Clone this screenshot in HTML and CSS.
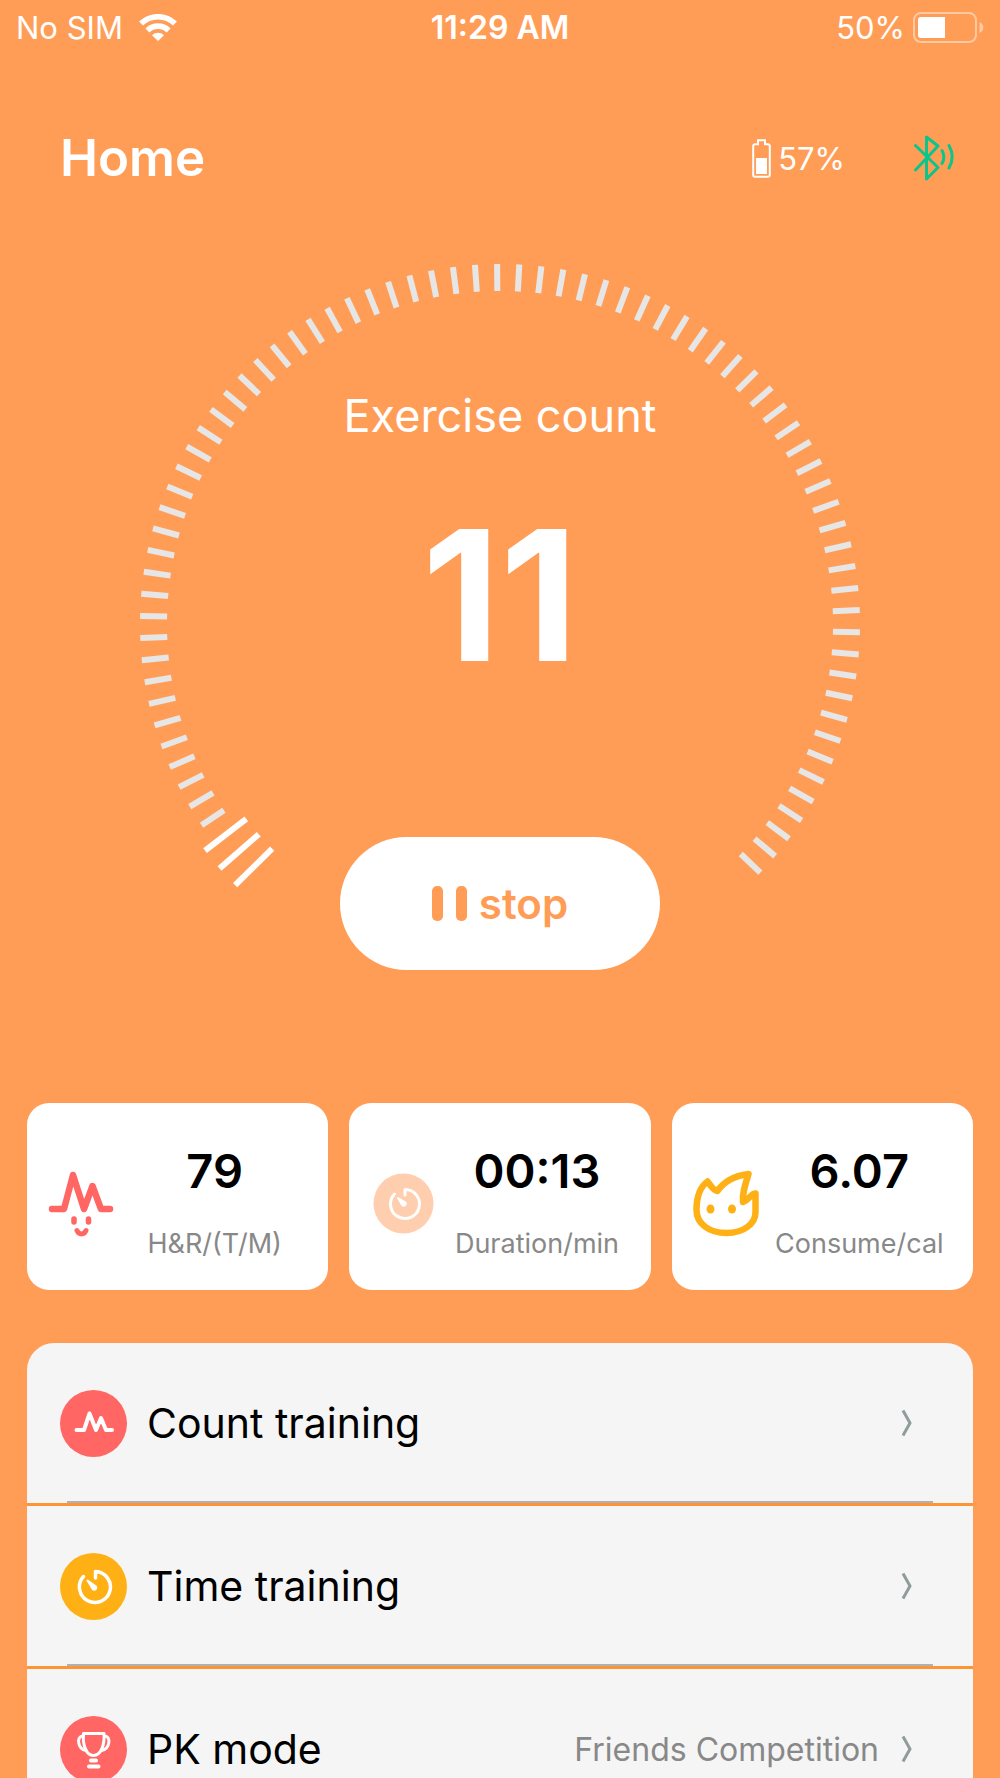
FILE: index.html
```html
<!DOCTYPE html>
<html lang="en">
<head>
  <meta charset="UTF-8" />
  <meta name="viewport" content="width=device-width, initial-scale=1.0" />
  <title>Home</title>
  <link rel="stylesheet" href="styles.css">
</head>
<body>
  <div class="screen">
    <!-- Status bar -->
    <div class="status-bar">
      <div class="status-left">
        <span>No SIM</span>
        <svg class="wifi" viewBox="0 0 38 27" aria-hidden="true">
          <g fill="none" stroke="#fff" stroke-width="5.6">
            <path d="M2 9.6a24.5 24.5 0 0 1 34 0" />
            <path d="M8.4 16.4a15.3 15.3 0 0 1 21.2 0" />
          </g>
          <path d="M19 27l-6-5.8a8.6 8.6 0 0 1 12 0z" fill="#fff" />
        </svg>
      </div>
      <span class="clock">11:29 AM</span>
      <div class="status-right">
        <span>50%</span>
        <svg class="phone-battery" viewBox="0 0 71 31" aria-hidden="true">
          <rect x="1" y="1" width="62" height="29" rx="7" fill="none" stroke="#fff" stroke-opacity=".45" stroke-width="2" />
          <path d="M5 8a3 3 0 0 1 3-3h24v21H8a3 3 0 0 1-3-3z" fill="#fff" />
          <path d="M66.500 10c5 2 5 9 0 11z" fill="#fff" fill-opacity=".45" />
        </svg>
      </div>
    </div>

    <!-- Page header -->
    <header class="header">
      <h1>Home</h1>
      <div class="device">
        <svg class="device-battery" viewBox="0 0 19 39" aria-hidden="true">
          <path d="M6 1.200h7v4h3a1.800 1.800 0 0 1 1.800 1.800v29a1.800 1.800 0 0 1-1.800 1.800H3A1.800 1.800 0 0 1 1.200 36V7A1.800 1.800 0 0 1 3 5.200h3z" fill="none" stroke="#fff" stroke-width="2" />
          <rect x="4" y="19" width="11" height="16" fill="#fff" />
        </svg>
        <span class="device-level">57%</span>
        <svg class="bluetooth" viewBox="0 0 40 46" fill="none" stroke="#0bc58b" stroke-width="3" stroke-linejoin="round" stroke-linecap="round" aria-hidden="true">
          <path d="M1.500 10.500L24 32.500 12.500 44V2L24 11 1.500 35" />
          <path d="M28 15.500a13 13 0 0 1 0 13" />
          <path d="M35 10.500a23 23 0 0 1 0 22.500" />
        </svg>
      </div>
    </header>

    <!-- Exercise gauge -->
    <section class="gauge">
      <svg class="dial" id="dial" viewBox="-372 -360 744 706" aria-hidden="true"></svg>
      <div class="gauge-content">
        <h2>Exercise count</h2>
        <output class="count">11</output>
        <button type="button" class="stop">
          <svg viewBox="0 0 35 35" aria-hidden="true">
            <rect width="11" height="35" rx="5" />
            <rect x="24" width="11" height="35" rx="5" />
          </svg>
          stop
        </button>
      </div>
    </section>

    <!-- Stats -->
    <section class="stats">
      <div class="card">
        <svg viewBox="0 0 68 68" fill="none" stroke="#ff6664" stroke-linejoin="round" stroke-linecap="round" aria-hidden="true">
          <path d="M5 40h12L26 6l11 34 8.500-23L54 40h9" stroke-width="6.500" />
          <path d="M27 50v3M41.500 50v3" stroke-width="5.500" />
          <path d="M30 61.500c2 4.500 7 4.500 9 0" stroke-width="5" />
        </svg>
        <div class="stat">
          <span class="value">79</span>
          <span class="label">H&amp;R/(T/M)</span>
        </div>
      </div>
      <div class="card">
        <svg viewBox="0 0 68 68" aria-hidden="true">
          <circle cx="34.500" cy="34.500" r="30" fill="#ffceae" />
          <path d="M25.500 25A14.500 14.500 0 1 0 36 20.500V26" fill="none" stroke="#fff" stroke-width="3" stroke-linejoin="round" stroke-linecap="round" />
          <path d="M29 29l7.500 4.500a2.200 2.200 0 0 1-3 3z" fill="#fff" stroke="#fff" stroke-width="2" stroke-linejoin="round" />
        </svg>
        <div class="stat">
          <span class="value">00:13</span>
          <span class="label">Duration/min</span>
        </div>
      </div>
      <div class="card">
        <svg viewBox="0 0 68 68" aria-hidden="true">
          <path d="M15.500 12.500C8 18 4.500 28 4.500 41c0 14 13 23 30 23s29-9 29-21V24.500c-4.500 0-6 6-12.500 8.500-1-8 2-17 5.500-28C42 7 31.500 13 25.500 22c-5-1-6.500-5-10-9.500z" fill="none" stroke="#ffb014" stroke-width="6.500" stroke-linejoin="round" />
          <ellipse cx="18.500" cy="40" rx="4" ry="4.500" fill="#ffb014" />
          <ellipse cx="40" cy="40" rx="4" ry="4.500" fill="#ffb014" />
        </svg>
        <div class="stat">
          <span class="value">6.07</span>
          <span class="label">Consume/cal</span>
        </div>
      </div>
    </section>

    <!-- Training modes -->
    <nav class="modes">
      <ul>
        <li>
          <a href="#count">
            <svg class="mode-icon" viewBox="0 0 67 67" aria-hidden="true">
              <circle cx="33.500" cy="33.500" r="33.500" fill="#ff6664" />
              <path d="M16.500 40h7.500l5.500-16.500L36 40l5-12 5 12h6" fill="none" stroke="#fff" stroke-width="4" stroke-linejoin="round" stroke-linecap="round" />
            </svg>
            <span class="mode-name">Count training</span>
            <svg class="chevron" viewBox="0 0 11 28" aria-hidden="true"><path d="M2 1.500l7 12.500-7 12.500" /></svg>
          </a>
        </li>
        <li>
          <a href="#time">
            <svg class="mode-icon" viewBox="0 0 67 67" aria-hidden="true">
              <circle cx="33.500" cy="33.500" r="33.500" fill="#ffb014" />
              <path d="M23.500 23.500A15.500 15.500 0 1 0 35.500 18.500V25" fill="none" stroke="#fff" stroke-width="3.500" stroke-linejoin="round" stroke-linecap="round" />
              <path d="M27.500 27.500l8.500 6a2.200 2.200 0 0 1-3 3z" fill="#fff" stroke="#fff" stroke-width="2" stroke-linejoin="round" />
            </svg>
            <span class="mode-name">Time training</span>
            <svg class="chevron" viewBox="0 0 11 28" aria-hidden="true"><path d="M2 1.500l7 12.500-7 12.500" /></svg>
          </a>
        </li>
        <li>
          <a href="#pk">
            <svg class="mode-icon" viewBox="0 0 67 67" aria-hidden="true">
              <circle cx="33.500" cy="33.500" r="33.500" fill="#ff6664" />
              <g fill="none" stroke="#fff" stroke-width="3" stroke-linejoin="round" stroke-linecap="round">
                <path d="M23.500 17.500h20.500c.8 11-3 22-10.500 22s-11-11-10-22z" />
                <path d="M23 20c-7 0-5.500 13 3 14.500M44.500 20c7 0 5.500 13-3 14.500" />
                <path d="M31 44.500h5M29 50.500h9.500" stroke-width="4" />
              </g>
            </svg>
            <span class="mode-name">PK mode</span>
            <span class="mode-note">Friends Competition</span>
            <svg class="chevron" viewBox="0 0 11 28" aria-hidden="true"><path d="M2 1.500l7 12.500-7 12.500" /></svg>
          </a>
        </li>
      </ul>
    </nav>
  </div>

  <script>
    const TICKS = 77;
    const START = -134.6;
    const STEP = 3.53;

    // Draw the dial, the first "done" ticks are longer and white
    function drawDial(done) {
      const dial = document.getElementById('dial');
      for (let i = 0; i < TICKS; i++) {
        const line = document.createElementNS('http://www.w3.org/2000/svg', 'line');
        const active = i < done;
        line.setAttribute('class', active ? 'tick active' : 'tick');
        line.setAttribute('y1', active ? -372 : -360);
        line.setAttribute('y2', active ? -320 : -333);
        line.setAttribute('transform', `rotate(${START + i * STEP})`);
        dial.appendChild(line);
      }
    }

    drawDial(3);
  </script>
</body>
</html>
```
FILE: styles.css
```css
* {
  box-sizing: border-box;
}
body {
  margin: 0;
  font-family: Inter, "Liberation Sans", sans-serif;
  background-color: #ff9d57;
  color: #fff;
}
h1,
h2,
ul {
  margin: 0;
  padding: 0;
}
.screen {
  display: flex;
  flex-direction: column;
  height: 100vh;
  overflow: hidden;
}
.status-bar {
  display: grid;
  grid-template-columns: 1fr auto 1fr;
  align-items: center;
  height: 55px;
  padding: 0 16px;
  font-size: 31px;
}
.status-left,
.status-right {
  display: flex;
  align-items: center;
}
.status-left {
  gap: 16px;
}
.status-right {
  justify-content: flex-end;
  gap: 8px;
}
.clock {
  font-size: 32px;
  font-weight: 600;
  font-kerning: none;
}
.wifi {
  width: 38px;
  height: 27px;
}
.phone-battery {
  width: 71px;
  height: 31px;
}
.header {
  display: flex;
  align-items: center;
  justify-content: space-between;
  padding: 70px 46px 0 60px;
}
.header h1 {
  font-size: 51px;
  line-height: 66px;
  font-weight: 600;
}
.device {
  display: flex;
  align-items: center;
}
.device-battery {
  width: 19px;
  height: 39px;
}
.device-level {
  margin: 0 69px 0 7px;
  font-size: 31px;
}
.bluetooth {
  width: 40px;
  height: 46px;
}
.gauge {
  display: grid;
  width: 75%;
  max-width: 744px;
  margin: 73px auto 0;
}
.dial,
.gauge-content {
  grid-area: 1 / 1;
  width: 100%;
}
.dial {
  overflow: visible;
}
.tick {
  stroke: #e6e6e6;
  stroke-width: 6;
}
.tick.active {
  stroke: #fff;
}
.gauge-content {
  display: flex;
  flex-direction: column;
  align-items: center;
  padding-top: 124px;
}
.gauge-content h2 {
  font-size: 45px;
  line-height: 56px;
  font-weight: 400;
}
.count {
  margin-top: 42px;
  font-size: 181px;
  line-height: 220px;
  font-weight: 700;
  font-kerning: none;
}
.stop {
  display: flex;
  align-items: center;
  justify-content: center;
  gap: 12px;
  width: 320px;
  height: 133px;
  margin-top: auto;
  border: none;
  border-radius: 67px;
  background-color: #fff;
  color: #ff9d57;
  font-family: inherit;
  font-size: 42px;
  font-weight: 600;
  cursor: pointer;
}
.stop svg {
  width: 35px;
  height: 35px;
  fill: #ff9d57;
}
.stats {
  display: grid;
  grid-template-columns: repeat(3, 1fr);
  gap: 21px;
  margin: 133px 27px 0;
}
.card {
  display: flex;
  align-items: center;
  gap: 8px;
  height: 187px;
  padding: 13px 22px 0 20px;
  border-radius: 22px;
  background-color: #fff;
}
.card svg {
  flex: none;
  width: 68px;
  height: 68px;
}
.stat {
  display: flex;
  flex: 1;
  flex-direction: column;
  align-items: center;
  gap: 29px;
  margin-bottom: 4px;
  white-space: nowrap;
}
.value {
  color: #000;
  font-size: 47px;
  line-height: 56px;
  font-weight: 600;
}
.label {
  color: #888;
  font-size: 27px;
  line-height: 32px;
}
.modes {
  flex: 1;
  min-height: 0;
  margin: 53px 27px 0;
  border-radius: 27px 27px 0 0;
  overflow-y: auto;
  scrollbar-width: none;
}
.modes ul {
  display: flex;
  flex-direction: column;
  gap: 3px;
  background-color: #ff9433;
  list-style: none;
}
.modes li {
  background-color: #f5f5f5;
}
.modes li::after {
  content: "";
  display: block;
  height: 2px;
  margin: 0 40px;
  background-color: #aeb2b5;
}
.modes a {
  display: flex;
  align-items: center;
  height: 158px;
  padding: 2px 61px 0 33px;
  color: #000;
  text-decoration: none;
}
.mode-icon {
  width: 67px;
  height: 67px;
  margin-right: 20px;
}
.mode-name {
  flex: 1;
  font-size: 41px;
}
.mode-note {
  margin-right: 22px;
  color: #888;
  font-size: 32px;
}
.chevron {
  width: 11px;
  height: 28px;
  fill: none;
  stroke: #8f9c9b;
  stroke-width: 3;
}
```
